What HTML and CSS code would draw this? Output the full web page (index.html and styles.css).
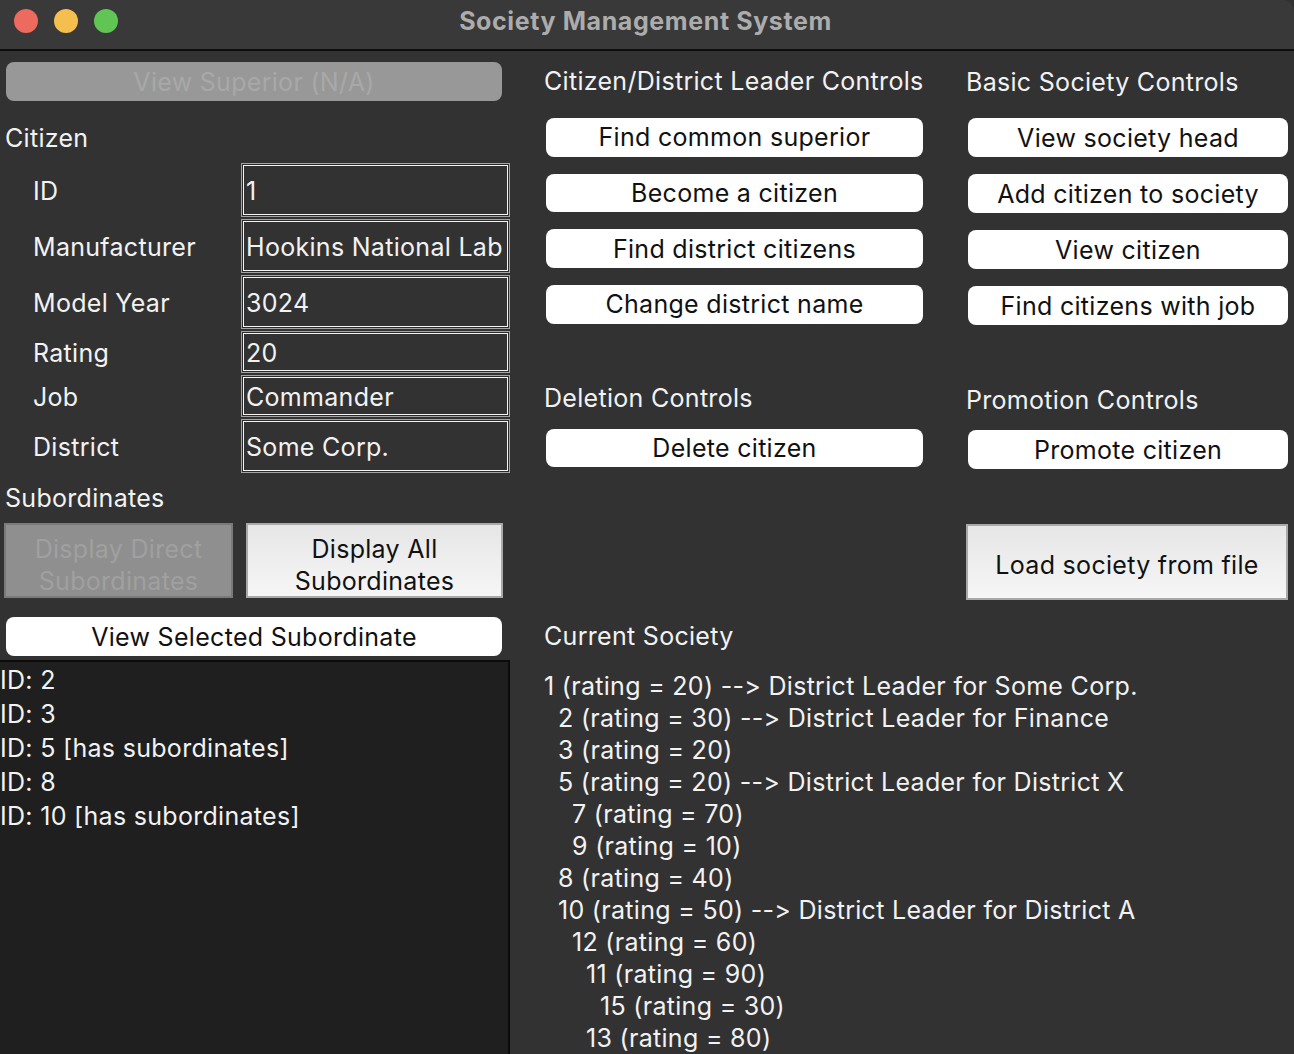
FILE: index.html
```html
<!DOCTYPE html>
<html>
<head>
<meta charset="utf-8">
<link rel="stylesheet" href="styles.css">
</head>
<body>
<div class="window">
  <div class="titlebar">
    <div class="lights">
      <span class="light red"></span>
      <span class="light yellow"></span>
      <span class="light green"></span>
    </div>
    <div class="title">Society Management System</div>
  </div>
  <div class="main">
    <div class="left">
      <div class="btn wide disabled">View Superior (N/A)</div>
      <div class="section-label">Citizen</div>
      <div class="form">
        <div class="flabel tall">ID</div><div class="field tall">1</div>
        <div class="flabel tall">Manufacturer</div><div class="field tall">Hookins National Lab</div>
        <div class="flabel tall">Model Year</div><div class="field tall">3024</div>
        <div class="flabel short">Rating</div><div class="field short">20</div>
        <div class="flabel short">Job</div><div class="field short">Commander</div>
        <div class="flabel tall">District</div><div class="field tall">Some Corp.</div>
      </div>
      <div class="section-label sub">Subordinates</div>
      <div class="pair">
        <div class="sqbtn off">Display Direct<br>Subordinates</div>
        <div class="sqbtn on">Display All<br>Subordinates</div>
      </div>
      <div class="btn wide">View Selected Subordinate</div>
      <div class="listbox">
        <div>ID: 2</div>
        <div>ID: 3</div>
        <div>ID: 5 [has subordinates]</div>
        <div>ID: 8</div>
        <div>ID: 10 [has subordinates]</div>
      </div>
    </div>
    <div class="col mid">
      <div class="heading">Citizen/District Leader Controls</div>
      <div class="btn">Find common superior</div>
      <div class="btn">Become a citizen</div>
      <div class="btn">Find district citizens</div>
      <div class="btn">Change district name</div>
      <div class="heading second">Deletion Controls</div>
      <div class="btn">Delete citizen</div>
      <div class="heading society">Current Society</div>
      <div class="tree">
        <div class="l0">1 (rating = 20) --&gt; District Leader for Some Corp.</div>
        <div class="l1">2 (rating = 30) --&gt; District Leader for Finance</div>
        <div class="l1">3 (rating = 20)</div>
        <div class="l1">5 (rating = 20) --&gt; District Leader for District X</div>
        <div class="l2">7 (rating = 70)</div>
        <div class="l2">9 (rating = 10)</div>
        <div class="l1">8 (rating = 40)</div>
        <div class="l1">10 (rating = 50) --&gt; District Leader for District A</div>
        <div class="l2">12 (rating = 60)</div>
        <div class="l3">11 (rating = 90)</div>
        <div class="l4">15 (rating = 30)</div>
        <div class="l3">13 (rating = 80)</div>
      </div>
    </div>
    <div class="col right">
      <div class="heading">Basic Society Controls</div>
      <div class="btn">View society head</div>
      <div class="btn">Add citizen to society</div>
      <div class="btn">View citizen</div>
      <div class="btn">Find citizens with job</div>
      <div class="heading second">Promotion Controls</div>
      <div class="btn">Promote citizen</div>
      <div class="sqbtn on load">Load society from file</div>
    </div>
  </div>
</div>
</body>
</html>
```

FILE: styles.css
```css
* { box-sizing: border-box; }
html, body {
  margin: 0;
  padding: 0;
  width: 1294px;
  height: 1054px;
  overflow: hidden;
  background: #323232;
  font-family: "Inter", "Noto Sans", sans-serif;
  font-size: 25px;
  letter-spacing: 0.3px;
  color: #f2f2f2;
}
.window {
  width: 1294px;
  height: 1054px;
  display: flex;
  flex-direction: column;
}
.titlebar {
  height: 51px;
  flex: none;
  background: #393939;
  border-bottom: 2px solid #0e0e0e;
  position: relative;
  display: flex;
  align-items: center;
  justify-content: center;
  border-top-right-radius: 12px;
}
.lights {
  position: absolute;
  left: 14px;
  top: 9px;
  display: flex;
  gap: 16px;
}
.light {
  width: 24px;
  height: 24px;
  border-radius: 50%;
  display: block;
}
.red { background: #ed6a5e; }
.yellow { background: #f5bf4f; }
.green { background: #61c554; }
.title {
  font-weight: 700;
  font-size: 25px;
  letter-spacing: 0.6px;
  color: #acacac;
  margin-top: -8px;
  margin-left: -3px;
}
.main {
  flex: 1;
  display: flex;
  min-height: 0;
}
.left {
  width: 510px;
  flex: none;
  display: flex;
  flex-direction: column;
  padding-top: 11px;
}
.btn {
  height: 39px;
  background: #ffffff;
  color: #111;
  border-radius: 8px;
  display: flex;
  align-items: center;
  justify-content: center;
  white-space: nowrap;
}
.btn.wide {
  margin-left: 6px;
  width: 496px;
}
.btn.disabled {
  background: #989898;
  color: #a8a8a8;
}
.section-label {
  height: 39px;
  margin-top: 17px;
  padding-left: 5px;
  display: flex;
  align-items: center;
}
.section-label.sub {
  margin-top: 4px;
  height: 42px;
  margin-bottom: 4px;
}
.form {
  margin-top: 6px;
  display: grid;
  grid-template-columns: 241px 269px;
  row-gap: 2px;
}
.flabel {
  padding-left: 33px;
  display: flex;
  align-items: center;
  padding-top: 2px;
}
.field {
  display: flex;
  align-items: center;
  padding-left: 4px;
  padding-top: 2px;
  border: 1px solid #a4a4a4;
  box-shadow: inset 0 0 0 1px #2a2a2a, inset 0 0 0 2px #f4f4f4;
  white-space: nowrap;
  overflow: hidden;
}
.tall { height: 54px; }
.short { height: 42px; }
.pair {
  display: flex;
  height: 75px;
}
.sqbtn {
  display: flex;
  align-items: center;
  justify-content: center;
  text-align: center;
  line-height: 32px;
  padding-top: 8px;
  border: 2px solid #a5a5a5;
}
.sqbtn.off {
  margin-left: 4px;
  width: 229px;
  background: #8f8f8f;
  color: #a0a0a0;
  border-color: #7a7a7a;
}
.sqbtn.on {
  margin-left: 13px;
  width: 257px;
  background: linear-gradient(#e6e6e6, #f6f6f6);
  color: #111;
  border-color: #a9a9a9;
}
.left .btn.wide:not(.disabled) {
  margin-top: 19px;
}
.listbox {
  margin-top: 4px;
  flex: 1;
  background: #1f1f1f;
  border: 2px solid #0c0c0c;
  border-left: none;
  border-bottom: none;
  line-height: 34px;
  padding-top: 1px;
}
.col {
  display: flex;
  flex-direction: column;
  padding-top: 11px;
}
.col .btn {
  margin-top: 17px;
  margin-left: 2px;
}
.heading {
  height: 39px;
  display: flex;
  align-items: center;
  white-space: nowrap;
}
.heading.second {
  margin-top: 55px;
}
.col .heading.second + .btn {
  margin-top: 11px;
}
.mid {
  margin-left: 34px;
  width: 380px;
}
.mid .btn { width: 377px; }
.right {
  margin-left: 42px;
  width: 322px;
}
.right .btn { width: 320px; }
.heading.society {
  margin-top: 149px;
}
.tree {
  margin-top: 15px;
  line-height: 32px;
  white-space: nowrap;
}
.l1 { padding-left: 14px; }
.l2 { padding-left: 28px; }
.l3 { padding-left: 42px; }
.l4 { padding-left: 56px; }
.sqbtn.load {
  margin-left: 0;
  margin-top: 55px;
  width: 322px;
  height: 76px;
  padding-top: 6px;
}
```
